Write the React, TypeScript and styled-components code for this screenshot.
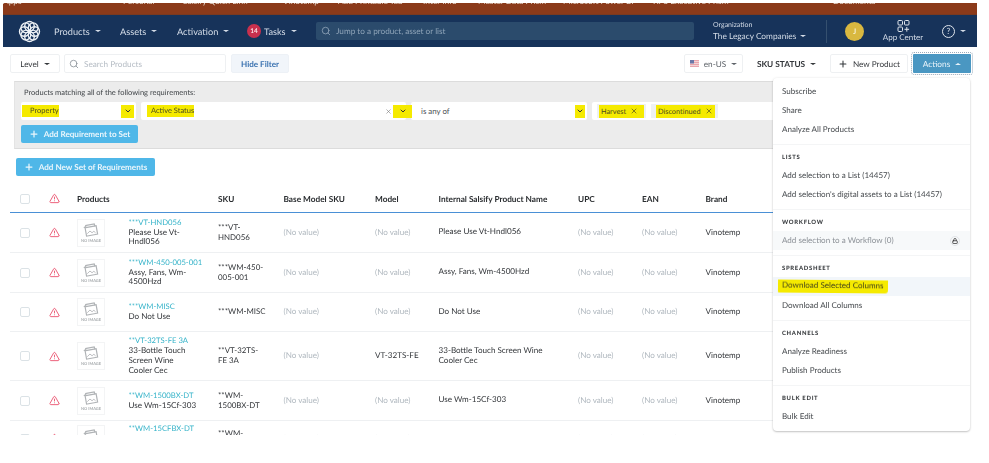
import React from "react";
import styled, { createGlobalStyle } from "styled-components";
import { Search, Plus, X, ChevronDown, Lock, TriangleAlert } from "lucide-react";

const Global = createGlobalStyle`
  html, body { margin: 0; padding: 0; background: #fff; }
  body { font-family: "Lato", "Liberation Sans", sans-serif; color: #2c2f33; text-rendering: geometricPrecision; }
  * { box-sizing: border-box; }
`;

const Screen = styled.div`
  position: relative;
  width: 974px;
  height: 435px;
  margin-left: 3px;
  padding-top: 3px;
  overflow: hidden;
  font-size: 8.2px;
  filter: blur(0.42px);
`;

const Bookmarks = styled.div`
  height: 12px;
  background: #8b3a1a;
  border-bottom: 1px solid #7a3a20;
  display: flex;
  align-items: flex-start;
  overflow: hidden;
`;
const BookmarkTrack = styled.div`
  height: 2.5px;
  width: 100%;
  display: flex;
  align-items: flex-end;
  overflow: hidden;
  color: #e8dcd2;
  font-size: 8.4px;
  line-height: 10px;
  white-space: nowrap;
`;
const Bookmark = styled.span<{ $w: number }>`
  flex: 0 0 ${(p) => p.$w}px;
  overflow: hidden;
`;

const Nav = styled.nav`
  height: 32px;
  background: #17335a;
  display: flex;
  align-items: center;
  color: #d5dde8;
  font-size: 9.2px;
`;
const LogoSlot = styled.div`
  flex: 0 0 51px;
  display: flex;
  justify-content: center;
  padding-left: 2px;
`;
const NavLink = styled.div<{ $w: number }>`
  flex: 0 0 ${(p) => p.$w}px;
  min-width: 0;
  display: flex;
  align-items: center;
  gap: 5px;
  white-space: nowrap;
`;
const Caret = styled.i<{ $up?: boolean; $c?: string; $s?: number }>`
  display: inline-block;
  width: 0;
  height: 0;
  flex: none;
  border-left: ${(p) => p.$s ?? 3}px solid transparent;
  border-right: ${(p) => p.$s ?? 3}px solid transparent;
  ${(p) => (p.$up ? "border-bottom" : "border-top")}: ${(p) => (p.$s ?? 3) - 0.5}px solid ${(p) => p.$c ?? "currentColor"};
`;
const Badge = styled.span`
  flex: none;
  width: 14px;
  height: 14px;
  border-radius: 50%;
  background: #c9304d;
  color: #fbe3e6;
  font-size: 6.5px;
  font-weight: 700;
  display: flex;
  align-items: center;
  justify-content: center;
  margin-right: -2px;
`;
const JumpBox = styled.div`
  flex: 0 0 378px;
  height: 18px;
  margin-left: 30px;
  border-radius: 2px;
  background: #2b4b6c;
  color: #8fa4b8;
  display: flex;
  align-items: center;
  gap: 5px;
  padding-left: 5px;
  font-size: 8.2px;
`;
const Org = styled.div`
  margin-left: 19px;
  flex: 0 0 114px;
  height: 23px;
  border-right: 1px solid #35506f;
  display: flex;
  flex-direction: column;
  justify-content: center;
  gap: 1px;
  font-size: 7px;
  line-height: 9.5px;
`;
const OrgName = styled.div`
  font-size: 8.3px;
  line-height: 10.5px;
  display: flex;
  align-items: center;
  gap: 4px;
  white-space: nowrap;
`;
const Avatar = styled.div`
  flex: none;
  width: 19px;
  height: 19px;
  border-radius: 50%;
  margin-left: 18px;
  background: #d9b840;
  color: #f6efd0;
  font-size: 7.5px;
  font-weight: 700;
  display: flex;
  align-items: center;
  justify-content: center;
`;
const AppCenter = styled.div`
  flex: 0 0 42px;
  margin-left: 18px;
  display: flex;
  flex-direction: column;
  align-items: center;
  font-size: 8px;
  line-height: 10px;
  white-space: nowrap;
`;
const Help = styled.div`
  margin-left: 18px;
  display: flex;
  align-items: center;
  gap: 5px;
`;
const HelpCircle = styled.span`
  width: 13px;
  height: 13px;
  border: 1px solid #dfe5ec;
  border-radius: 50%;
  font-size: 8.5px;
  line-height: 11px;
  text-align: center;
`;

const Toolbar = styled.div`
  height: 31px;
  padding: 7px 6px 0 7px;
  display: flex;
  align-items: flex-start;
`;
const ToolButton = styled.div<{ $w: number }>`
  flex: 0 0 ${(p) => p.$w}px;
  height: 19px;
  border: 1px solid #eef0f2;
  border-radius: 2px;
  background: #fff;
  display: flex;
  align-items: center;
  justify-content: center;
  gap: 5px;
  color: #33363a;
  font-size: 8.2px;
  white-space: nowrap;
`;
const SearchBox = styled(ToolButton)`
  margin-left: 4px;
  justify-content: flex-start;
  padding-left: 4px;
  color: #b5bcc4;
`;
const HideFilter = styled(ToolButton)`
  margin-left: 5px;
  background: #f1f5fa;
  border-color: #edf1f6;
  color: #3a72b0;
  font-weight: 700;
  font-size: 8.1px;
`;
const Spacer = styled.div`
  flex: 1;
`;
const LocaleButton = styled(ToolButton)`
  color: #5c6167;
`;
const StatusLabel = styled.div`
  flex: 0 0 87px;
  height: 19px;
  display: flex;
  align-items: center;
  justify-content: center;
  gap: 5px;
  color: #33363a;
  font-size: 8.3px;
  font-weight: 700;
  white-space: nowrap;
`;
const ActionsButton = styled.div`
  flex: 0 0 58px;
  height: 19px;
  margin-left: 5px;
  background: #4a97c2;
  outline: 1px dotted #9ab;
  outline-offset: 1px;
  border-radius: 1px;
  color: #e8f3f9;
  display: flex;
  align-items: center;
  justify-content: center;
  gap: 5px;
  font-size: 8.3px;
`;

const Panel = styled.section`
  margin: 3px 16px 0 11px;
  height: 68px;
  background: #ececec;
  border-top: 1px solid #dcdcdc;
  border-bottom: 1px solid #dcdcdc;
  border-left: 1px solid #e4e4e4;
  padding: 6px 6px;
`;
const PanelTitle = styled.div`
  font-size: 7.5px;
  line-height: 10px;
  color: #3f4347;
  padding-left: 3px;
  margin-bottom: 4px;
`;
const Selects = styled.div`
  display: grid;
  grid-template-columns: 115px 265px 176px 1fr;
  gap: 5px;
`;
const Select = styled.div`
  height: 18px;
  background: #fff;
  border-radius: 2px;
  display: flex;
  align-items: center;
  padding: 0 2px 0 1px;
  font-size: 7.5px;
  color: #4c5054;
`;
const Mark = styled.span<{ $w: number }>`
  flex: 0 0 ${(p) => p.$w}px;
  background: #f5ea00;
  padding-left: 8px;
  line-height: 12px;
  color: #4b4b20;
  white-space: nowrap;
`;
const MarkWide = styled(Mark)`
  padding-left: 4px;
  margin-left: 5px;
`;
const PlainValue = styled.span`
  padding-left: 9px;
  font-size: 7.9px;
`;
const SelectSpacer = styled.span`
  flex: 1;
`;
const CaretMark = styled.span<{ $w: number; $over?: number }>`
  flex: 0 0 ${(p) => p.$w}px;
  height: 13px;
  margin-right: ${(p) => -(p.$over ?? 0)}px;
  position: relative;
  background: #f5ea00;
  display: flex;
  align-items: center;
  justify-content: center;
  color: #333;
`;
const ClearIcon = styled.span`
  display: flex;
  margin-right: 1px;
  color: #777;
`;
const Chips = styled.div`
  display: flex;
  align-items: center;
  gap: 5px;
  padding-left: 5px;
  height: 18px;
  background: #fff;
  border-radius: 2px;
`;
const Chip = styled.span<{ $w: number; $inset: number }>`
  flex: 0 0 ${(p) => p.$w}px;
  height: 14px;
  background: #eef1f4;
  display: flex;
  align-items: center;
  padding-left: ${(p) => p.$inset}px;
`;
const ChipMark = styled.span<{ $w: number }>`
  flex: 0 0 ${(p) => p.$w}px;
  height: 13px;
  background: #f5ea00;
  display: flex;
  align-items: center;
  gap: 4px;
  padding-left: 2px;
  font-size: 7.3px;
  color: #4b4b20;
  white-space: nowrap;
`;
const BlueButton = styled.div<{ $w: number }>`
  width: ${(p) => p.$w}px;
  height: 18px;
  border-radius: 2px;
  background: #4fb7e8;
  color: #eaf6fc;
  display: flex;
  align-items: center;
  justify-content: center;
  gap: 5px;
  font-size: 8.15px;
  font-weight: 700;
  white-space: nowrap;
`;
const AddRequirement = styled(BlueButton)`
  margin-top: 5px;
`;
const AddSet = styled(BlueButton)`
  margin: 9px 0 0 13px;
`;

const Table = styled.div`
  margin: 5px 16px 0 7px;
`;
const columns = "39px 28px 51.5px 89.5px 65.5px 91.5px 63.5px 139.5px 64px 63.5px 1fr";
const HeadRow = styled.div`
  display: grid;
  grid-template-columns: ${columns};
  align-items: center;
  height: 32px;
  padding-top: 4px;
  border-bottom: 1px solid #4a90d6;
  font-size: 8.25px;
  font-weight: 700;
  color: #2a2d30;
`;
const Row = styled.div<{ $h: number }>`
  display: grid;
  grid-template-columns: ${columns};
  align-items: center;
  height: ${(p) => p.$h}px;
  border-bottom: 1px solid #eef0f2;
  font-size: 8.1px;
  line-height: 9.8px;
  color: #33363a;
`;
const Check = styled.span`
  display: block;
  width: 10px;
  height: 10px;
  margin-left: 10px;
  border: 1px solid #dbe2e6;
  border-radius: 2px;
  background: #fff;
`;
const AlertCell = styled.span`
  display: flex;
  color: #ea5470;
`;
const Thumb = styled.div`
  width: 28px;
  height: 28px;
  border: 1px solid #f3f4f5;
  display: flex;
  flex-direction: column;
  align-items: center;
  padding-top: 3px;
  gap: 1px;
  color: #a9adb0;
`;
const ThumbLabel = styled.span`
  font-size: 4px;
  line-height: 4px;
  font-weight: 700;
  white-space: nowrap;
`;
const NameCell = styled.div`
  width: 70px;
`;
const Code = styled.div`
  color: #35b3c9;
  font-size: 7.7px;
  white-space: nowrap;
`;
const SkuCell = styled.div`
  width: 49px;
  font-size: 7.9px;
`;
const NoValue = styled.div`
  color: #b0b8bf;
`;
const WideCell = styled.div`
  width: 120px;
  margin-top: -1px;
`;

const Menu = styled.div`
  position: absolute;
  left: 770px;
  top: 78px;
  width: 197px;
  height: 352.5px;
  background: #fff;
  border-radius: 4px;
  box-shadow: 0 1px 2px rgba(0, 0, 0, 0.22), 0 0 3px rgba(0, 0, 0, 0.08);
  padding-top: 3.5px;
  font-size: 8.05px;
  color: #45494d;
  z-index: 5;
`;
const MenuSection = styled.div`
  padding: 5.1px 0 4.5px;
  border-top: 1px solid #f4f5f6;
`;
const FirstSection = styled.div`
  padding-bottom: 5px;
`;
const MenuHead = styled.div`
  height: 16.5px;
  padding-left: 9px;
  font-size: 5.9px;
  line-height: 16px;
  font-weight: 900;
  letter-spacing: 0.7px;
  color: #3a3d40;
`;
const MenuItem = styled.div<{ $bg?: string; $muted?: boolean }>`
  position: relative;
  height: 19px;
  padding-left: 9px;
  line-height: 19px;
  white-space: nowrap;
  background: ${(p) => p.$bg ?? "transparent"};
  color: ${(p) => (p.$muted ? "#8b9096" : "inherit")};
  display: flex;
  align-items: center;
  justify-content: space-between;
`;
const Scribble = styled.span`
  background: #f5ea00;
  margin-left: -4px;
  padding: 0 4px 2px 4px;
  line-height: 11px;
  border-radius: 0 0 3px 1px;
  transform: rotate(0.5deg);
  color: #45451a;
`;
const LockBadge = styled.span`
  width: 10px;
  height: 10px;
  margin-right: 10px;
  border-radius: 50%;
  border: 1px solid #e2e5e8;
  display: flex;
  align-items: center;
  justify-content: center;
  color: #333;
`;

const Logo = () => (
  <svg width="23" height="23" viewBox="0 0 24 24" fill="none" stroke="#eef2f6" strokeWidth="1.5">
    {[0, 45, 90, 135, 180, 225, 270, 315].map((a) => (
      <circle key={a} cx="12" cy="6.6" r="5" transform={`rotate(${a} 12 12)`} />
    ))}
  </svg>
);
const AppIcon = () => (
  <svg width="13" height="12" viewBox="0 0 13 12" fill="none" stroke="#dfe5ec" strokeWidth="1">
    <rect x="1" y="0.5" width="4.5" height="4.5" rx="1" />
    <rect x="7.5" y="0.5" width="4.5" height="4.5" rx="1" />
    <rect x="1" y="7" width="4.5" height="4.5" rx="1" />
    <path d="M9.8 7v4.6M7.5 9.3h4.6" />
  </svg>
);
const Flag = () => (
  <svg width="9" height="7" viewBox="0 0 9 7">
    <rect width="9" height="7" fill="#e9a5ad" />
    <path d="M0 1.5h9M0 3.5h9M0 5.5h9" stroke="#f6dfe1" strokeWidth="0.8" />
    <rect width="4" height="3.5" fill="#6b78a8" />
  </svg>
);
const NoImage = () => (
  <svg width="16" height="15" viewBox="0 0 15 14" fill="none" stroke="#b0b3b6" strokeWidth="1.1">
    <path d="M2 2.5 10.5 .8 11.2 3" />
    <path d="M.8 4.5 3 3" />
    <rect x="2.5" y="3.5" width="10.5" height="8" transform="rotate(-10 7 7)" />
    <path d="M4 10l2.5-2.5 2 1.6 1.7-1.4 1.6 1.5" strokeWidth="0.8" />
  </svg>
);

const rows = [
  { h: 40, code: "***VT-HND056", name: "Please Use Vt-Hndl056", sku: "***VT-HND056", model: "", internal: "Please Use Vt-Hndl056" },
  { h: 40, code: "***WM-450-005-001", name: "Assy, Fans, Wm-4500Hzd", sku: "***WM-450-005-001", model: "", internal: "Assy, Fans, Wm-4500Hzd" },
  { h: 39, code: "***WM-MISC", name: "Do Not Use", sku: "***WM-MISC", model: "", internal: "Do Not Use" },
  { h: 49, code: "**VT-32TS-FE 3A", name: "33-Bottle Touch Screen Wine Cooler Cec", sku: "**VT-32TS-FE 3A", model: "VT-32TS-FE", internal: "33-Bottle Touch Screen Wine Cooler Cec" },
  { h: 40, code: "**WM-1500BX-DT", name: "Use Wm-15Cf-303", sku: "**WM-1500BX-DT", model: "", internal: "Use Wm-15Cf-303" },
  { h: 36, code: "**WM-15CFBX-DT", name: "Use Wm-15Cf-303 Wine Cooler", sku: "**WM-15CFBX-DT", model: "", internal: "" },
];
const marks = [
  ["Apps", 50], ["", 70], ["Personal", 60], ["Salsify  Quick Link", 100], ["Vinotemp", 55], ["Add Printable Tab", 85], ["Inter Info", 55],
  ["Master Data Prism", 85], ["Microsoft Power BI", 90], ["KPS Executive Prism", 180], ["Documents", 70],
] as const;

export default function App() {
  return (
    <Screen>
      <Global />
      <Bookmarks>
        <BookmarkTrack>
          {marks.map(([t, w], i) => (
            <Bookmark key={i} $w={w}>{t}</Bookmark>
          ))}
        </BookmarkTrack>
      </Bookmarks>
      <Nav>
        <LogoSlot><Logo /></LogoSlot>
        <NavLink $w={66}>Products <Caret /></NavLink>
        <NavLink $w={57}>Assets <Caret /></NavLink>
        <NavLink $w={70}>Activation <Caret /></NavLink>
        <NavLink $w={39}><Badge>14</Badge> Tasks <Caret /></NavLink>
        <JumpBox><Search size={10} />Jump to a product, asset or list</JumpBox>
        <Org>
          <div>Organization</div>
          <OrgName>The Legacy Companies <Caret /></OrgName>
        </Org>
        <Avatar>J</Avatar>
        <AppCenter><AppIcon />App Center</AppCenter>
        <Help><HelpCircle>?</HelpCircle><Caret /></Help>
      </Nav>
      <Toolbar>
        <ToolButton $w={50}>Level <Caret /></ToolButton>
        <SearchBox $w={162}><Search size={10} color="#8a9299" />Search Products</SearchBox>
        <HideFilter $w={58}>Hide Filter</HideFilter>
        <Spacer />
        <LocaleButton $w={59}><Flag />en-US <Caret /></LocaleButton>
        <StatusLabel>SKU STATUS <Caret /></StatusLabel>
        <ToolButton $w={78}><Plus size={10} strokeWidth={2.5} />New Product</ToolButton>
        <ActionsButton>Actions <Caret $up /></ActionsButton>
      </Toolbar>
      <Panel>
        <PanelTitle>Products matching all of the following requirements:</PanelTitle>
        <Selects>
          <Select>
            <Mark $w={36}>Property</Mark><SelectSpacer />
            <CaretMark $w={13}><ChevronDown size={8} strokeWidth={3} /></CaretMark>
          </Select>
          <Select>
            <MarkWide $w={45}>Active Status</MarkWide><SelectSpacer />
            <ClearIcon><X size={7} /></ClearIcon>
            <CaretMark $w={19} $over={8}><ChevronDown size={8} strokeWidth={3} /></CaretMark>
          </Select>
          <Select>
            <PlainValue>is any of</PlainValue><SelectSpacer />
            <CaretMark $w={10}><ChevronDown size={8} strokeWidth={3} /></CaretMark>
          </Select>
          <Chips>
            <Chip $w={49} $inset={2}><ChipMark $w={45}>Harvest <X size={8} strokeWidth={2} /></ChipMark></Chip>
            <Chip $w={67} $inset={5}><ChipMark $w={59}>Discontinued <X size={8} strokeWidth={2} /></ChipMark></Chip>
          </Chips>
        </Selects>
        <AddRequirement $w={117}><Plus size={10} strokeWidth={3} />Add Requirement to Set</AddRequirement>
      </Panel>
      <AddSet $w={139}><Plus size={10} strokeWidth={3} />Add New Set of Requirements</AddSet>
      <Table>
        <HeadRow>
          <Check />
          <AlertCell><TriangleAlert size={11} /></AlertCell>
          <div>Products</div>
          <div />
          <div>SKU</div>
          <div>Base Model SKU</div>
          <div>Model</div>
          <div>Internal Salsify Product Name</div>
          <div>UPC</div>
          <div>EAN</div>
          <div>Brand</div>
        </HeadRow>
        {rows.map((r) => (
          <Row key={r.code} $h={r.h}>
            <Check />
            <AlertCell><TriangleAlert size={11} /></AlertCell>
            <Thumb><NoImage /><ThumbLabel>NO IMAGE</ThumbLabel></Thumb>
            <NameCell><Code>{r.code}</Code>{r.name}</NameCell>
            <SkuCell>{r.sku}</SkuCell>
            <NoValue>(No value)</NoValue>
            {r.model ? <div>{r.model}</div> : <NoValue>(No value)</NoValue>}
            <WideCell>{r.internal}</WideCell>
            <NoValue>(No value)</NoValue>
            <NoValue>(No value)</NoValue>
            <div>Vinotemp</div>
          </Row>
        ))}
      </Table>
      <Menu>
        <FirstSection>
          <MenuItem>Subscribe</MenuItem>
          <MenuItem>Share</MenuItem>
          <MenuItem>Analyze All Products</MenuItem>
        </FirstSection>
        <MenuSection>
          <MenuHead>LISTS</MenuHead>
          <MenuItem>Add selection to a List (14457)</MenuItem>
          <MenuItem>Add selection's digital assets to a List (14457)</MenuItem>
        </MenuSection>
        <MenuSection>
          <MenuHead>WORKFLOW</MenuHead>
          <MenuItem $bg="#f7f9fa" $muted>Add selection to a Workflow (0)
            <LockBadge><Lock size={6} strokeWidth={3} /></LockBadge>
          </MenuItem>
        </MenuSection>
        <MenuSection>
          <MenuHead>SPREADSHEET</MenuHead>
          <MenuItem $bg="#f2f6fa"><Scribble>Download Selected Columns</Scribble></MenuItem>
          <MenuItem>Download All Columns</MenuItem>
        </MenuSection>
        <MenuSection>
          <MenuHead>CHANNELS</MenuHead>
          <MenuItem>Analyze Readiness</MenuItem>
          <MenuItem>Publish Products</MenuItem>
        </MenuSection>
        <MenuSection>
          <MenuHead>BULK EDIT</MenuHead>
          <MenuItem>Bulk Edit</MenuItem>
        </MenuSection>
      </Menu>
    </Screen>
  );
}
